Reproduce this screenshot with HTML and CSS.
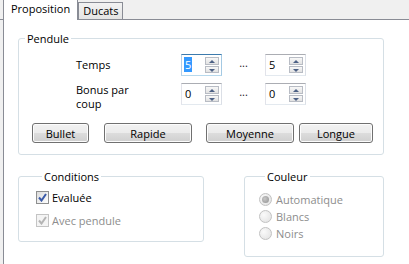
FILE: index.html
```html
<!DOCTYPE html>
<html lang="fr">
<head>
<meta charset="UTF-8">
<title>Proposition</title>
<link rel="stylesheet" href="styles.css">
</head>
<body>
<div class="tabs">
<div class="tab tab-active">Proposition</div>
<div class="tab">Ducats</div>
</div>
<div class="panel">
<fieldset class="group group-pendule">
<legend>Pendule</legend>
<div class="pendule-grid">
<div class="field-label">Temps</div>
<div class="spinner spinner-focus">
<div class="spin-value"><span class="selected">5</span></div>
<div class="spin-buttons"><span class="spin-up"></span><span class="spin-down"></span></div>
</div>
<div class="dots">...</div>
<div class="spinner">
<div class="spin-value">5</div>
<div class="spin-buttons"><span class="spin-up"></span><span class="spin-down"></span></div>
</div>
<div class="field-label field-label-top">Bonus par<br>coup</div>
<div class="spinner">
<div class="spin-value">0</div>
<div class="spin-buttons"><span class="spin-up"></span><span class="spin-down"></span></div>
</div>
<div class="dots">...</div>
<div class="spinner">
<div class="spin-value">0</div>
<div class="spin-buttons"><span class="spin-up"></span><span class="spin-down"></span></div>
</div>
</div>
<div class="presets">
<button class="btn btn-bullet">Bullet</button>
<button class="btn btn-rapide">Rapide</button>
<button class="btn btn-moyenne">Moyenne</button>
<button class="btn btn-longue">Longue</button>
</div>
</fieldset>
<div class="bottom-row">
<fieldset class="group group-conditions">
<legend>Conditions</legend>
<div class="check-row">
<span class="checkbox"><svg width="9" height="9" viewBox="0 0 9 9"><path d="M1 4.5 L3.5 7.5 L8 1" fill="none" stroke="#3a5aa8" stroke-width="2"/></svg></span>
<span>Evaluée</span>
</div>
<div class="check-row disabled">
<span class="checkbox"><svg width="9" height="9" viewBox="0 0 9 9"><path d="M1 4.5 L3.5 7.5 L8 1" fill="none" stroke="#b4b4b4" stroke-width="2"/></svg></span>
<span>Avec pendule</span>
</div>
</fieldset>
<fieldset class="group group-couleur">
<legend>Couleur</legend>
<div class="radio-row disabled"><span class="radio radio-on"></span><span>Automatique</span></div>
<div class="radio-row disabled"><span class="radio"></span><span>Blancs</span></div>
<div class="radio-row disabled"><span class="radio"></span><span>Noirs</span></div>
</fieldset>
</div>
</div>
</body>
</html>
```

FILE: styles.css
```css
* {
    margin: 0;
    padding: 0;
    box-sizing: border-box;
}
body {
    background: #f0f0f0;
    font-family: 'Open Sans', 'Noto Sans', sans-serif;
    font-size: 11px;
    color: #000;
    overflow: hidden;
    width: 409px;
    height: 264px;
}
.tabs {
    display: flex;
    height: 20px;
    padding-left: 3px;
    border-bottom: 1px solid #898c95;
}
.tab {
    height: 17px;
    margin-top: 2px;
    padding: 0 4px;
    line-height: 15px;
    border: 1px solid #898c95;
    border-bottom: none;
    background: linear-gradient(#f2f2f2, #e4e4e4);
}
.tab-active {
    height: 20px;
    margin-top: 0;
    margin-bottom: -1px;
    padding: 0 7px;
    line-height: 18px;
    border-top: none;
    background: #fff;
    position: relative;
}
.panel {
    margin-left: 3px;
    height: 244px;
    width: 420px;
    background: #fff;
    border-left: 1px solid #898c95;
    padding: 11px 0 0 14px;
}
.group {
    border: 1px solid #d5dfe5;
    border-radius: 3px;
    min-width: 0;
}
.group legend {
    margin-left: 6px;
    padding: 0 2px;
    line-height: 15px;
}
.group-pendule {
    width: 366px;
    padding-top: 8px;
    padding-bottom: 11px;
}
.pendule-grid {
    display: grid;
    grid-template-columns: 105px 41px 43px 41px;
    grid-auto-rows: 22px;
    row-gap: 7px;
    margin-left: 57px;
}
.field-label {
    align-self: center;
    line-height: 14px;
}
.field-label-top {
    align-self: start;
    margin-top: 0;
}
.dots {
    text-align: center;
    line-height: 17px;
    color: #222;
}
.spinner {
    display: flex;
    border: 1px solid #abadb3;
    border-color: #abadb3 #dbdfe6 #e3e9ef #e2e3ea;
    background: #fff;
}
.spinner-focus {
    border-color: #3d7bad #a4c9e3 #b7d9ed #b5cfe7;
}
.spin-value {
    flex: 1;
    padding-left: 3px;
    line-height: 20px;
}
.selected {
    display: inline-block;
    background: #3399ff;
    color: #fff;
    line-height: 15px;
    padding: 0 1px;
    margin-left: -1px;
}
.spin-buttons {
    width: 14px;
    margin: 2px 2px 2px 0;
    display: flex;
    flex-direction: column;
    gap: 1px;
}
.spin-up,
.spin-down {
    flex: 1;
    border: 1px solid #b8bcc4;
    background: linear-gradient(#f8f8f8, #e2e2e2);
    position: relative;
}
.spin-up::after,
.spin-down::after {
    content: '';
    position: absolute;
    left: 3px;
    top: 2px;
    border-left: 3px solid transparent;
    border-right: 3px solid transparent;
}
.spin-up::after {
    border-bottom: 3px solid #4d6185;
}
.spin-down::after {
    border-top: 3px solid #4d6185;
}
.presets {
    display: flex;
    margin-top: 18px;
}
.btn {
    height: 20px;
    font-family: inherit;
    font-size: 11px;
    color: #000;
    border: 1px solid #707070;
    border-radius: 3px;
    background: linear-gradient(#f2f2f2 0%, #ebebeb 50%, #dddddd 50%, #cfcfcf 100%);
    box-shadow: inset 0 0 0 1px #fcfcfc;
}
.btn-bullet {
    width: 57px;
    margin-left: 13px;
}
.btn-rapide {
    width: 88px;
    margin-left: 15px;
}
.btn-moyenne {
    width: 88px;
    margin-left: 14px;
}
.btn-longue {
    width: 74px;
    margin-left: 5px;
}
.bottom-row {
    display: flex;
    align-items: flex-start;
    margin-top: 14px;
}
.group-conditions {
    width: 186px;
    padding: 7px 0 14px 17px;
}
.check-row {
    display: flex;
    align-items: center;
    gap: 3px;
    height: 13px;
    line-height: 13px;
}
.check-row + .check-row {
    margin-top: 10px;
}
.checkbox {
    width: 13px;
    height: 13px;
    border: 1px solid #8e8f8f;
    background: linear-gradient(135deg, #dcdcdc, #fefefe);
    display: flex;
    align-items: center;
    justify-content: center;
}
.disabled {
    color: #8d8d8d;
}
.check-row.disabled .checkbox {
    border-color: #c4c4c4;
    background: #f4f4f4;
}
.group-couleur {
    width: 140px;
    margin-left: 40px;
    padding: 7px 0 14px 14px;
}
.radio-row {
    display: flex;
    align-items: center;
    gap: 4px;
    height: 17px;
}
.radio {
    width: 13px;
    height: 13px;
    border-radius: 50%;
    border: 1px solid #c2c2c2;
    background: radial-gradient(circle at 35% 35%, #fafafa, #e0e0e0);
    position: relative;
}
.radio-on::after {
    content: '';
    position: absolute;
    left: 2px;
    top: 2px;
    width: 7px;
    height: 7px;
    border-radius: 50%;
    background: radial-gradient(circle at 40% 40%, #c8c8c8, #8f8f8f);
}
```
